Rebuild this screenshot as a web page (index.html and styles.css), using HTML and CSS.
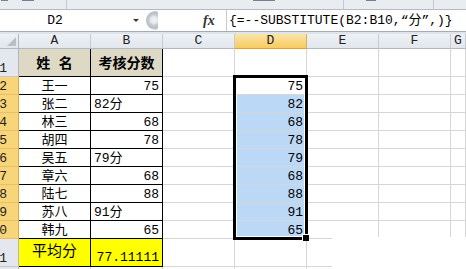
FILE: index.html
```html
<!DOCTYPE html>
<html>
<head>
<meta charset="utf-8">
<link rel="stylesheet" href="styles.css">
</head>
<body>
<div class="ribbon">
  <div class="rgroup g1"><span class="frag f1"></span><span class="frag f2"></span></div>
  <div class="rgroup g2"><span class="frag f3"></span></div>
  <div class="rgroup g3"><span class="frag f4"></span></div>
  <div class="rgroup g4"></div>
</div>
<div class="fbar">
  <div class="namebox">D2</div>
  <div class="nb-arrow"></div>
  <div class="grip"></div>
  <div class="fx">fx</div>
  <div class="fsep"></div>
  <div class="formula">{=--SUBSTITUTE(B2:B10,“分”,)}</div>
</div>
<div class="fgap"></div>
<div class="sheet">
  <div class="corner"><span class="tri"></span></div>
  <div class="ch">A</div><div class="ch">B</div><div class="ch">C</div><div class="ch on">D</div><div class="ch">E</div><div class="ch">F</div><div class="ch">G</div>

  <div class="rh">1</div>
  <div class="c t hd ctr">姓 名</div><div class="c t hd ctr">考核分数</div><div class="c"></div><div class="c"></div><div class="c"></div><div class="c"></div><div class="c"></div>

  <div class="rh on">2</div>
  <div class="c t ctr">王一</div><div class="c t r">75</div><div class="c"></div><div class="c r">75</div><div class="c"></div><div class="c"></div><div class="c"></div>

  <div class="rh on">3</div>
  <div class="c t ctr">张二</div><div class="c t l">82分</div><div class="c"></div><div class="c r sel-bg">82</div><div class="c"></div><div class="c"></div><div class="c"></div>

  <div class="rh on">4</div>
  <div class="c t ctr">林三</div><div class="c t r">68</div><div class="c"></div><div class="c r sel-bg">68</div><div class="c"></div><div class="c"></div><div class="c"></div>

  <div class="rh on">5</div>
  <div class="c t ctr">胡四</div><div class="c t r">78</div><div class="c"></div><div class="c r sel-bg">78</div><div class="c"></div><div class="c"></div><div class="c"></div>

  <div class="rh on">6</div>
  <div class="c t ctr">吴五</div><div class="c t l">79分</div><div class="c"></div><div class="c r sel-bg">79</div><div class="c"></div><div class="c"></div><div class="c"></div>

  <div class="rh on">7</div>
  <div class="c t ctr">章六</div><div class="c t r">68</div><div class="c"></div><div class="c r sel-bg">68</div><div class="c"></div><div class="c"></div><div class="c"></div>

  <div class="rh on">8</div>
  <div class="c t ctr">陆七</div><div class="c t r">88</div><div class="c"></div><div class="c r sel-bg">88</div><div class="c"></div><div class="c"></div><div class="c"></div>

  <div class="rh on">9</div>
  <div class="c t ctr">苏八</div><div class="c t l">91分</div><div class="c"></div><div class="c r sel-bg">91</div><div class="c"></div><div class="c"></div><div class="c"></div>

  <div class="rh on">10</div>
  <div class="c t ctr">韩九</div><div class="c t r">65</div><div class="c"></div><div class="c r sel-bg">65</div><div class="c"></div><div class="c"></div><div class="c"></div>

  <div class="rh">11</div>
  <div class="c t yl avg">平均分</div><div class="c t yl r">77.11111</div><div class="c"></div><div class="c"></div><div class="c"></div><div class="c"></div><div class="c"></div>

  <div class="rh">12</div>
  <div class="c"></div><div class="c"></div><div class="c"></div><div class="c"></div><div class="c"></div><div class="c"></div><div class="c"></div>

  <div class="selbox"></div>
  <div class="handle"></div>
  <div class="mask"></div>
</div>
</body>
</html>
```

FILE: styles.css
```css
* { box-sizing: border-box; }

html, body {
  margin: 0;
  padding: 0;
}

body {
  width: 466px;
  height: 269px;
  overflow: hidden;
  background: #ffffff;
  color: #000;
  font-family: "Liberation Mono", "Noto Sans CJK SC", monospace;
  font-size: 13px;
}

/* ribbon remnant */
.ribbon {
  height: 10px;
  display: flex;
  background: #e9edf2;
  border-bottom: 1px solid #b3bac4;
}
.rgroup {
  height: 9px;
  display: flex;
  align-items: flex-start;
  border-right: 1px solid #c4cad3;
}
.g1 { width: 67px; }
.g2 { width: 277px; }
.g3 { width: 90px; }
.g4 { flex: 1; border-right: none; }
.frag {
  display: block;
  height: 1px;
  background: #7a818c;
}
.f1 { width: 7px; margin-left: 1px; }
.f2 { width: 12px; margin-left: 14px; }
.f3 { width: 22px; margin-left: 186px; }
.f4 { width: 10px; margin-left: 22px; }

/* formula bar */
.fbar {
  height: 22px;
  display: flex;
  align-items: center;
  background: #fff;
  border-bottom: 1px solid #a3abb6;
}
.namebox {
  width: 110px;
  text-align: center;
  font-size: 13px;
  line-height: 21px;
}
.nb-arrow {
  margin-left: 23px;
  width: 0;
  height: 0;
  border-left: 3px solid transparent;
  border-right: 3px solid transparent;
  border-top: 3px solid #3a3a3a;
}
.grip {
  margin-left: 7px;
  width: 12px;
  height: 19px;
  border-radius: 10px 2px 2px 10px;
  background: radial-gradient(circle at 8px 9px, #f4f5f7 0, #e2e4e8 4px, #c9cdd3 5px, #b8bdc5 8px, #d8dce1 10px);
}
.fx {
  margin-left: 45px;
  width: 14px;
  font-family: "Liberation Serif", serif;
  font-style: italic;
  font-weight: bold;
  font-size: 14px;
  line-height: 21px;
  color: #333;
}
.fsep {
  margin-left: 9px;
  width: 1px;
  height: 21px;
  background: #c6ccd4;
}
.formula {
  margin-left: 2px;
  font-size: 13px;
  line-height: 21px;
  white-space: nowrap;
}
.fgap {
  height: 2px;
  background: #dfe4ea;
}

/* sheet */
.sheet {
  position: relative;
  height: 235px;
  overflow: hidden;
  display: grid;
  grid-template-columns: 19px repeat(6, 72px) 1fr;
  grid-template-rows: 15px 28px repeat(9, 18px) 28px 18px;
}
.corner {
  background: linear-gradient(#eef1f5, #e1e6ec);
  border-right: 1px solid #b1b8c2;
  border-bottom: 1px solid #b1b8c2;
  display: flex;
  justify-content: flex-end;
  align-items: flex-end;
  padding: 0 2px 2px 0;
}
.tri {
  width: 0;
  height: 0;
  border-left: 9px solid transparent;
  border-bottom: 9px solid #b9bfc7;
}
.ch {
  background: linear-gradient(#eef1f5, #e2e7ed);
  border-right: 1px solid #c5cbd3;
  border-bottom: 1px solid #b1b8c2;
  text-align: center;
  line-height: 14px;
  font-size: 13px;
  color: #222;
}
.ch.on {
  background: linear-gradient(#fbe5a6, #f6cb62);
  border-right-color: #d9b05a;
  border-bottom-color: #e89c3c;
}
.rh {
  background: #e4e8ee;
  border-right: 1px solid #b1b8c2;
  border-bottom: 1px solid #c5cbd3;
  display: flex;
  justify-content: flex-end;
  align-items: flex-end;
  padding: 0 11px 1px 0;
  overflow: hidden;
  line-height: 12px;
  font-size: 13px;
  color: #222;
}
.rh.on {
  background: #f9d57a;
  border-right-color: #e6a741;
  border-bottom-color: #e8c06a;
}
.c {
  border-right: 1px solid #d6d6d6;
  border-bottom: 1px solid #d6d6d6;
  display: flex;
  align-items: flex-end;
  padding-bottom: 1px;
  line-height: 12px;
  white-space: nowrap;
  overflow: hidden;
}
.c.t {
  border-right-color: #000;
  border-bottom-color: #000;
}
.ctr { justify-content: center; }
.r { justify-content: flex-end; padding-right: 3px; }
.l { justify-content: flex-start; padding-left: 3px; }
.hd {
  background: #ddd9c4;
  font-weight: bold;
  font-size: 14px;
  align-items: center;
  padding-top: 4px;
}
.yl { background: #ffff00; }
.yl.r { padding-bottom: 2px; }
.avg {
  justify-content: center;
  align-items: center;
  font-size: 15px;
  line-height: 16px;
  padding-bottom: 0;
}
.sel-bg { background: #bcd8f7; }

/* selection overlay */
.selbox {
  position: absolute;
  left: 233px;
  top: 41px;
  width: 75px;
  height: 165px;
  border: 3px solid #000;
  box-shadow: inset 0 0 0 1px #fff;
}
.handle {
  position: absolute;
  left: 302px;
  top: 200px;
  width: 7px;
  height: 7px;
  background: #000;
  border: 1px solid #fff;
  border-right: none;
  border-bottom: none;
}
.mask {
  position: absolute;
  left: 332px;
  top: 203px;
  right: 0;
  bottom: 0;
  background: #fff;
}
```
